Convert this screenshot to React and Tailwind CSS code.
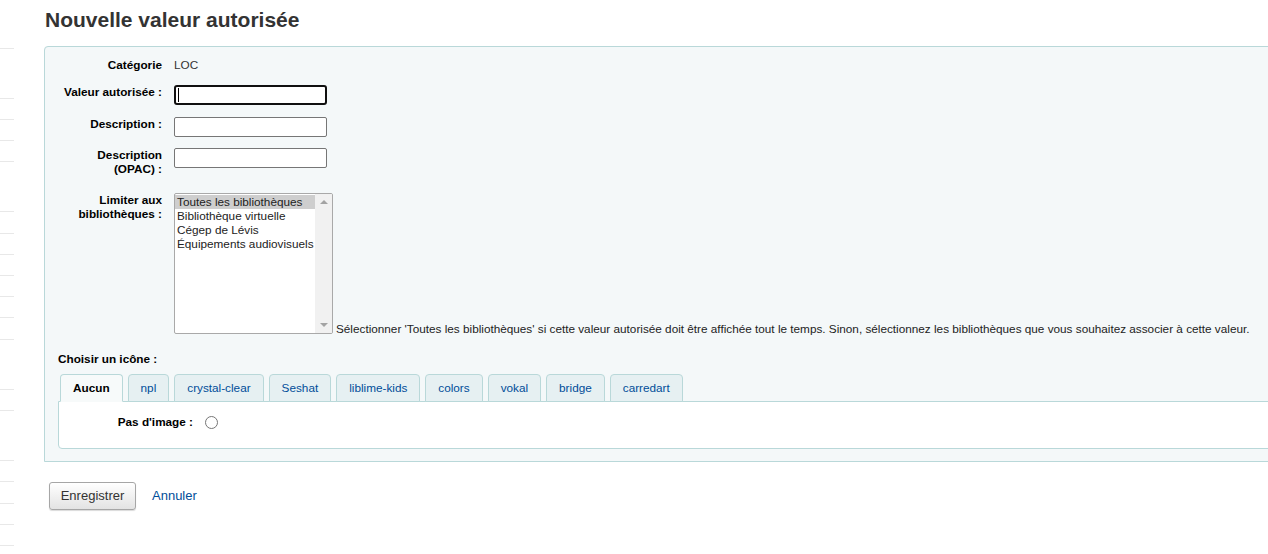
import React from 'react';

// left nav remnants: each entry is the gap down to the next divider line
const navLines = [
    'h-[49px]', 'h-[50px]', 'h-[21px]', 'h-[21px]', 'h-[21px]', 'h-[50px]', 'h-[22px]', 'h-[21px]', 'h-[21px]',
    'h-[21px]', 'h-[21px]', 'h-[22px]', 'h-[50px]', 'h-[21px]', 'h-[50px]', 'h-[21px]', 'h-[22px]', 'h-[21px]', 'h-[21px]',
];

const libraries = [
    'Toutes les bibliothèques',
    'Bibliothèque virtuelle',
    'Cégep de Lévis',
    'Équipements audiovisuels',
];

const iconSets = ['Aucun', 'npl', 'crystal-clear', 'Seshat', 'liblime-kids', 'colors', 'vokal', 'bridge', 'carredart'];

function Label({ children }) {
    return (
        <label className="w-[117px] shrink-0 text-right font-bold text-black leading-[14px]">
            {children}
        </label>
    );
}

function TextInput({ focused = false }) {
    if (focused) {
        return (
            <div className="relative">
                <input type="text" className="block w-[153px] h-[20px] bg-white border-2 border-[#101010] rounded-[3px] outline-none" />
                <span className="absolute left-[4px] top-[3px] w-px h-[14px] bg-black" />
            </div>
        );
    }
    return <input type="text" className="block w-[153px] h-[20px] bg-white border border-[#767676] rounded-[2px] outline-none" />;
}

function LibrarySelect() {
    return (
        <div className="flex w-[159px] h-[141px] bg-white border border-[#a9a9a9] rounded-[2px] overflow-hidden">
            <ul className="flex-1 pt-px text-[#222] leading-[14px]">
                {libraries.map((lib, i) => (
                    <li key={lib} className={`pl-[2px] whitespace-nowrap ${i === 0 ? 'bg-[#cecece]' : ''}`}>
                        {lib}
                    </li>
                ))}
            </ul>
            <div className="w-[17px] bg-[#f1f1f1] flex flex-col justify-between items-center py-[6px]">
                <span className="w-0 h-0 border-x-[4px] border-x-transparent border-b-[4px] border-b-[#a3a3a3]" />
                <span className="w-0 h-0 border-x-[4px] border-x-transparent border-t-[4px] border-t-[#a3a3a3]" />
            </div>
        </div>
    );
}

export default function App() {
    return (
        <div className="flex w-full h-[554px] overflow-hidden bg-white text-[11.75px] font-['Liberation_Sans',Arial,sans-serif]">
            {/* Sidebar, cut off by the viewport */}
            <div className="w-[14px] shrink-0 flex flex-col">
                {navLines.map((h, i) => (
                    <div key={i} className={`${h} shrink-0 border-b border-[#e8e8e8]`} />
                ))}
            </div>

            <main className="ml-[30px] shrink-0">
                <h1 className="mt-[7px] ml-px text-[21px] leading-[25px] font-bold text-[#333]">
                    Nouvelle valeur autorisée
                </h1>

                <fieldset className="mt-[14px] w-[1260px] bg-[#f4f8f9] border border-[#b9d8d9] rounded-tl-[4px] pb-[12px]">
                    <ol>
                        <li className="mt-[11px] flex gap-[12px]">
                            <Label>Catégorie</Label>
                            <span className="text-[#333] leading-[14px]">LOC</span>
                        </li>
                        <li className="mt-[13px] flex items-start gap-[12px]">
                            <Label>Valeur autorisée :</Label>
                            <TextInput focused />
                        </li>
                        <li className="mt-[12px] flex items-start gap-[12px]">
                            <Label>Description :</Label>
                            <TextInput />
                        </li>
                        <li className="mt-[11px] flex items-start gap-[12px]">
                            <Label>Description<br />(OPAC) :</Label>
                            <TextInput />
                        </li>
                        <li className="mt-[17px] flex items-start gap-[12px]">
                            <Label>Limiter aux<br />bibliothèques :</Label>
                            <div className="flex items-end">
                                <LibrarySelect />
                                <span className="ml-[3px] mb-[-2px] leading-[14px] text-[#222] whitespace-nowrap">
                                    Sélectionner 'Toutes les bibliothèques' si cette valeur autorisée doit être affichée tout le temps. Sinon, sélectionnez les bibliothèques que vous souhaitez associer à cette valeur.
                                </span>
                            </div>
                        </li>
                    </ol>

                    <div className="ml-[13px] mt-[18px]">
                        <div className="font-bold text-black leading-[14px]">Choisir un icône :</div>

                        <ul className="mt-[8px] ml-[2px] flex gap-[5px]">
                            {iconSets.map((name, i) => (
                                <li
                                    key={name}
                                    className={`h-[28px] -mb-px px-[12px] flex items-center border border-[#b9d8d9] rounded-t-[4px] ${
                                        i === 0
                                            ? 'bg-[#f7fafa] border-b-[#f7fafa] font-bold text-black'
                                            : 'bg-[#e6f0f2] text-[#004d99]'
                                    }`}
                                >
                                    {name}
                                </li>
                            ))}
                        </ul>

                        <div className="h-[48px] bg-white border border-[#b9d8d9] rounded-bl-[4px] pt-[12px]">
                            <div className="flex items-center gap-[12px]">
                                <span className="w-[134px] text-right font-bold text-black leading-[14px]">Pas d'image :</span>
                                <span className="mt-[2px] w-[13px] h-[13px] rounded-full border border-[#767676] bg-white" />
                            </div>
                        </div>
                    </div>
                </fieldset>

                <div className="mt-[20px] ml-[5px] flex items-center gap-[16px]">
                    <button className="w-[87px] h-[28px] border border-[#a6a6a6] rounded-[3px] bg-gradient-to-b from-white to-[#e3e3e3] shadow-[0_1px_1px_rgba(0,0,0,0.15)] text-[13px] text-[#333]">
                        Enregistrer
                    </button>
                    <a href="#" className="text-[13px] text-[#004d99]">Annuler</a>
                </div>
            </main>
        </div>
    );
}
